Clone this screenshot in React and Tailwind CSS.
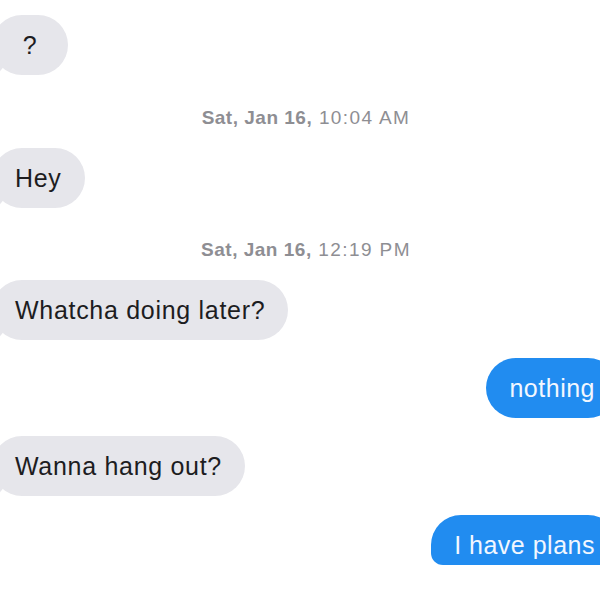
import React from "react";

function Gray({ children, className = "" }) {
  return (
    <div className="relative self-start ml-[-8px]">
      <div className="absolute bottom-0 left-[-7px] h-[20px] w-[20px] bg-[#e6e6eb] rounded-br-[15px]" />
      <div className="absolute bottom-0 left-[-10px] h-[20px] w-[10px] bg-white rounded-br-[10px]" />
      <div
        className={`relative h-[60px] rounded-[30px] bg-[#e6e6eb] px-[23px] py-[15px] text-[25px] leading-[30px] tracking-[0.7px] text-[#1d1d1f] whitespace-nowrap ${className}`}
      >
        {children}
      </div>
    </div>
  );
}

function Blue({ children, className = "" }) {
  return (
    <div
      className={`self-end mr-[-18px] rounded-[30px] bg-[#218cf0] px-[23px] py-[15px] text-[25px] leading-[30px] tracking-[0.5px] text-[#f2f7ff] whitespace-nowrap ${className}`}
    >
      {children}
    </div>
  );
}

function Stamp({ day, time, className = "" }) {
  return (
    <div className={`flex justify-center pl-[12px] h-[22px] text-[19px] leading-[22px] text-[#8e8e93] whitespace-nowrap ${className}`}>
      <span className="font-bold tracking-[0.5px]">{day}</span>
      <span className="tracking-[1.4px]">&nbsp;{time}</span>
    </div>
  );
}

export default function App() {
  return (
    <div
      className="w-[600px] h-[600px] overflow-hidden bg-white flex flex-col pt-[15px]"
      style={{ fontFamily: '"Liberation Sans", Arial, sans-serif' }}
    >
      <Gray className="w-[76px] text-center px-0">?</Gray>
      <Stamp day="Sat, Jan 16," time="10:04 AM" className="mt-[32px]" />
      <div className="mt-[19px] flex flex-col">
        <Gray>Hey</Gray>
      </div>
      <Stamp day="Sat, Jan 16," time="12:19 PM" className="mt-[31px]" />
      <div className="mt-[19px] flex flex-col">
        <Gray>Whatcha doing later?</Gray>
        <Blue className="mt-[18px]">nothing</Blue>
        <div className="mt-[18px] flex flex-col">
          <Gray>Wanna hang out?</Gray>
        </div>
        <Blue className="mt-[19px] h-[50px] overflow-hidden rounded-b-[12px]">I have plans</Blue>
      </div>
    </div>
  );
}
